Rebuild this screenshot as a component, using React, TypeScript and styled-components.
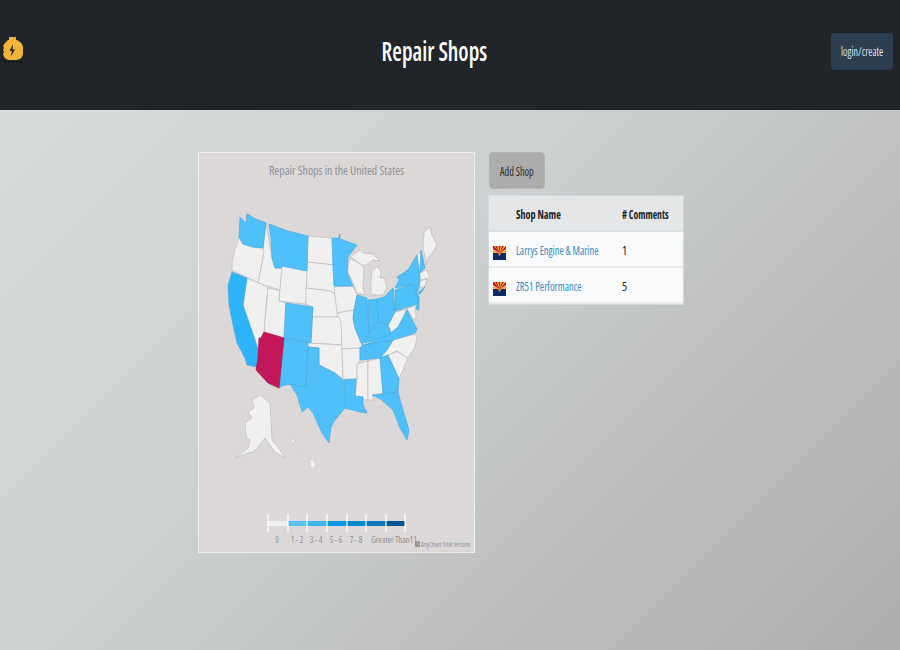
import React from "react";
import styled, { createGlobalStyle } from "styled-components";

const Global = createGlobalStyle`
  html, body { margin: 0; padding: 0; height: 100%; overflow: hidden; }
  body { font-family: "Open Sans", "Liberation Sans", sans-serif; font-stretch: 75%; }
  #root { height: 100%; }
`;
const Page = styled.div`
  width: 900px; height: 650px; display: flex; flex-direction: column;
  background: linear-gradient(135deg, #dadede 0%, #cdd0d0 45%, #adadad 100%);
`;
const Header = styled.header`
  height: 110px; background: #212529; display: flex; align-items: center;
  justify-content: space-between; padding: 0 7px 8px 0; box-sizing: border-box;
`;
const LogoBox = styled.div` width: 38px; height: 28px; display: flex; `;
const Title = styled.h1`
  margin: 0; color: #fff; font-size: 27px; font-weight: 600; line-height: 32px;
  transform: scaleX(0.82);
`;
const Squeeze = styled.span<{ $x: number; $origin?: string }>`
  display: inline-block; white-space: nowrap;
  transform: scaleX(${(p) => p.$x});
  transform-origin: ${(p) => p.$origin ?? "left"} center;
`;
const LoginButton = styled.button`
  width: 62px; height: 37px; padding: 1px 0 0; border: 0; border-radius: 4px; background: #2c3e50;
  color: #d5e3ea; font: inherit; font-stretch: 75%; font-size: 12px;
`;
const Main = styled.main`
  display: flex; align-items: flex-start; gap: 14px; padding: 42px 0 0 198px;
`;
const ChartCard = styled.div`
  width: 277px; height: 401px; background: #ddd8d8; box-sizing: border-box;
  border: 1px solid #eeeeee;
  svg { display: block; }
`;
const Side = styled.section` width: 194px; display: flex; flex-direction: column; gap: 7px; `;
const AddButton = styled.button`
  width: 56px; height: 37px; padding: 2px 0 0; border: 1px solid #b4b4b4; border-radius: 4px; background: #acacac;
  color: #2b2b2b; font: inherit; font-stretch: 75%; font-size: 12px;
`;
const Table = styled.table`
  width: 194px; border-collapse: separate; border-spacing: 0; table-layout: fixed; font-size: 12px; color: #212529;
  background: #f7f9fb; box-shadow: 0 0 0 1px rgba(222, 226, 230, 0.6);
`;
const Th = styled.th<{ $w?: number }>`
  height: 36px; padding: 2px 0 0; text-align: left; font-weight: 700; background: #e4e6e8;
  border-bottom: 2px solid #dcdfe2; box-sizing: border-box;
  ${(p) => (p.$w ? `width: ${p.$w}px;` : "")}
`;
const Td = styled.td`
  height: 36px; padding: 2px 0 0; border-bottom: 2px solid #e9ebed; box-sizing: border-box;
`;
const FlagCell = styled(Td)` padding: 7px 0 0 4px; svg { display: block; } `;
const Link = styled.a` color: #3a8cc0; text-decoration: none; `;

const Engine = () => (
  <svg width="24" height="28" viewBox="0 0 24 28">
    <path d="M9 0 H16 V4 H9 Z" fill="#f0b53a" />
    <path d="M8 3 H17 L20 5 L22 7 L23 10 V17 L22 20 L20 22 L16 23 H9 L6 22 L4 20 L3 17 L4 15 L3 13 L4 11 L3 9 L5 6 Z" fill="#f0b53a" />
    <path d="M13 7 L9.5 14 L12 14 L10.5 20 L15 12.5 L12.6 12.5 Z" fill="#2a2a26" />
    <path d="M4 25 h2 M8 25 h2 M12 25 h2 M16 25 h2 M20 25 h2" stroke="#111" strokeWidth="2" />
  </svg>
);

const AzFlag = () => (
  <svg width="13" height="14" viewBox="0 0 13 14">
    <rect width="13" height="7" fill="#c8102e" />
    <path d="M0 0h2L6.5 7 1 0M4 0h1.6L6.5 7M7.4 0H9L6.5 7M11 0h2L6.5 7M0 3l6.5 4L0 5.5M13 3L6.5 7 13 5.5" fill="#f5c342" />
    <path d="M0 5.8L6.5 7H0zM13 5.8L6.5 7H13z" fill="#f5c342" />
    <rect y="7" width="13" height="7" fill="#0c2a66" />
    <path d="M4.6 7h3.8L6.5 10.5z" fill="#c77a35" />
  </svg>
);

const B = "#4fc0fa";
const W = "#f0f0f0";
const C = "#2db3f7";
const R = "#c2185b";
type S = [string, string];
const states: S[] = [
  [W, "239,237 243,244 253,247 263,248 264,252 258,283 232,270 232,263 235,250"],
  [W, "266,223 268,235 272,258 275,268 282,268 280,290 258,283 264,252 263,248"],
  [W, "247,278 268,287 264,332 261,338 259,352 243,305"],
  [W, "268,288 280,291 279,301 286,303 284,338 264,332"],
  [W, "308,236 332,238 334,265 307,262"],
  [W, "307,262 334,265 335,294 330,291 306,288"],
  [W, "282,266 307,271 306,304 279,301"],
  [W, "306,288 330,291 335,294 340,317 312,317 313,307 306,304"],
  [W, "312,317 340,317 342,322 342,345 311,343"],
  [W, "308,343 342,345 343,380 335,373 319,365 319,348 308,347"],
  [W, "334,287 353,286 357,295 354,310 337,313"],
  [W, "337,313 354,310 353,318 355,328 362,345 360,348 342,349 341,322"],
  [W, "342,349 360,348 360,360 357,366 357,379 343,379"],
  [W, "357,364 368,361 368,400 363,400 363,397 355,396 357,379"],
  [W, "368,361 380,358 383,393 373,395 373,400 368,400"],
  [W, "388,355 397,351 408,358 399,379"],
  [W, "393,340 415,334 417,337 415,347 408,358 397,351 388,355 380,358 387,350"],
  [W, "388,325 395,312 403,310 407,308 403,318 398,327 391,333"],
  [W, "395,312 415,306 416,318 413,319 407,308 403,310"],
  [W, "348,267 350,258 362,265 364,268 363,288 365,295 357,293 352,280 348,273"],
  [W, "350,257 360,250 363,253 373,254 380,261 373,260 366,265 362,265"],
  [W, "371,295 371,280 372,270 378,267 381,272 380,278 384,278 387,287 383,295"],
  [W, "417,255 421,252 420,273 420,279"],
  [W, "423,248 424,232 430,227 432,235 437,245 433,252 428,258 427,265"],
  [W, "420,273 427,270 430,278 420,280"],
  [W, "420,281 427,279 425,286 420,288"],
  [B, "240,217 246,223 247,214 256,219 266,223 263,248 253,247 243,244 239,237"],
  [B, "269,224 288,231 308,236 307,271 282,266 281,268 275,268 272,258 271,238"],
  [C, "232,272 247,278 243,305 260,355 257,367 247,365 245,358 237,343 233,325 229,305 228,285"],
  [B, "286,303 313,307 311,343 284,338"],
  [B, "284,338 308,343 306,387 290,384 282,386 279,388"],
  [B, "308,347 319,348 319,365 335,373 343,380 346,400 345,408 335,420 331,427 329,443 322,433 313,413 308,407 302,412 297,395 290,384 306,387"],
  [B, "332,238 338,238 340,234 340,239 357,245 348,257 347,272 353,286 334,286 333,268"],
  [B, "344,380 356,379 355,396 363,397 363,405 367,413 360,412 352,410 345,408 346,400"],
  [B, "380,358 388,355 399,379 398,392 383,394"],
  [B, "372,395 383,394 398,392 403,410 409,430 407,440 400,428 393,410 385,403 382,400"],
  [B, "360,348 363,345 393,340 387,350 380,358 360,360"],
  [B, "365,345 383,337 391,333 398,327 403,318 407,310 417,329 415,333 393,340"],
  [B, "363,342 369,333 378,322 380,322 388,325 391,333 383,337 365,343"],
  [B, "377,299 384,297 393,288 395,312 388,325 380,322 378,322"],
  [B, "368,300 377,299 378,322 369,333"],
  [B, "357,295 367,298 369,333 362,345 355,328 353,318 354,310"],
  [B, "395,290 413,284 417,293 419,298 417,304 395,311"],
  [B, "395,288 399,280 397,277 408,270 417,255 420,278 419,288 417,292 413,284"],
  [B, "414,293 418,294 419,300 419,310 416,309 417,304 419,298"],
  [B, "421,250 425,268 420,273"],
  [B, "418,293 425,287 420,294"],
  [R, "264,332 284,338 279,388 268,383 256,370 258,358 259,338 261,338"],
];
const strokeFor = (f: string) => (f === R ? "#b0174f" : f === W ? "#bdbdbd" : "#47addf");
const alaska = "252,400 260,395 270,403 272,440 278,447 285,458 275,452 265,438 258,447 253,452 242,455 235,458 248,448 250,440 246,437 245,423 252,418 248,412 254,408";
const legend = ["#f0f0f0", "#5ac0f5", "#3fb5f0", "#0a9be0", "#0a88d0", "#0a76bb", "#02558f"];
const ticks = [268, 288, 307, 327, 347, 366, 386, 405];
const labels: [number, string][] = [[277, "0"], [297, "1 - 2"], [316, "3 - 4"], [336, "5 - 6"], [356, "7 - 8"], [394, "Greater Than11"]];

const UsaChart = () => (
  <svg width="275" height="399" viewBox="199 153 275 399" fontFamily="'Open Sans', sans-serif" style={{ fontStretch: "75%" }}>
    <text x="269" y="175" fontSize="13" fill="#8c9298" textLength="135" lengthAdjust="spacingAndGlyphs">Repair Shops in the United States</text>
    {states.map(([f, p], i) => (
      <polygon key={i} points={p} fill={f} stroke={strokeFor(f)} strokeWidth="0.7" strokeLinejoin="round" />
    ))}
    <polygon points={alaska} fill="#f0f0f0" stroke="#bdbdbd" strokeWidth="0.7" />
    <ellipse cx="293" cy="441" rx="1.5" ry="2" fill="#f0f0f0" stroke="#bdbdbd" strokeWidth="0.5" />
    <ellipse cx="300.5" cy="447" rx="1.2" ry="2" fill="#f0f0f0" stroke="#bdbdbd" strokeWidth="0.5" />
    <ellipse cx="309" cy="452.5" rx="1.6" ry="1.5" fill="#f0f0f0" stroke="#bdbdbd" strokeWidth="0.5" />
    <polygon points="310,459 314,460 316,465 312,469 310,466" fill="#f0f0f0" stroke="#bdbdbd" strokeWidth="0.5" />
    {legend.map((c, i) => (
      <rect key={c} x={ticks[i]} y="521" width={ticks[i + 1] - ticks[i]} height="5" fill={c} />
    ))}
    {ticks.map((t) => (
      <line key={t} x1={t} x2={t} y1="514" y2="532" stroke="#fff" strokeWidth="1.2" />
    ))}
    {labels.map(([x, l]) => (
      <text key={l} x={x} y="543" textAnchor="middle" fontSize="8.5" fill="#8b8f94">{l}</text>
    ))}
    <rect x="415" y="541" width="5" height="6" fill="#9a9a9a" />
    <text x="421" y="547" fontSize="6.5" fill="#8b8f94">AnyChart Trial Version</text>
  </svg>
);

const rows = [
  { name: "Larrys Engine & Marine", n: 1 },
  { name: "ZR51 Performance", n: 5 },
];

export default function App() {
  return (
    <Page>
      <Global />
      <Header>
        <LogoBox><Engine /></LogoBox>
        <Title>Repair Shops</Title>
        <LoginButton><Squeeze $x={0.84} $origin="center">login/create</Squeeze></LoginButton>
      </Header>
      <Main>
        <ChartCard><UsaChart /></ChartCard>
        <Side>
          <AddButton><Squeeze $x={0.85} $origin="center">Add Shop</Squeeze></AddButton>
          <Table>
            <thead>
              <tr>
                <Th $w={27} />
                <Th $w={106}><Squeeze $x={0.85}>Shop Name</Squeeze></Th>
                <Th><Squeeze $x={0.81}># Comments</Squeeze></Th>
              </tr>
            </thead>
            <tbody>
              {rows.map((r) => (
                <tr key={r.name}>
                  <FlagCell><AzFlag /></FlagCell>
                  <Td><Link href="#"><Squeeze $x={0.87}>{r.name}</Squeeze></Link></Td>
                  <Td>{r.n}</Td>
                </tr>
              ))}
            </tbody>
          </Table>
        </Side>
      </Main>
    </Page>
  );
}
